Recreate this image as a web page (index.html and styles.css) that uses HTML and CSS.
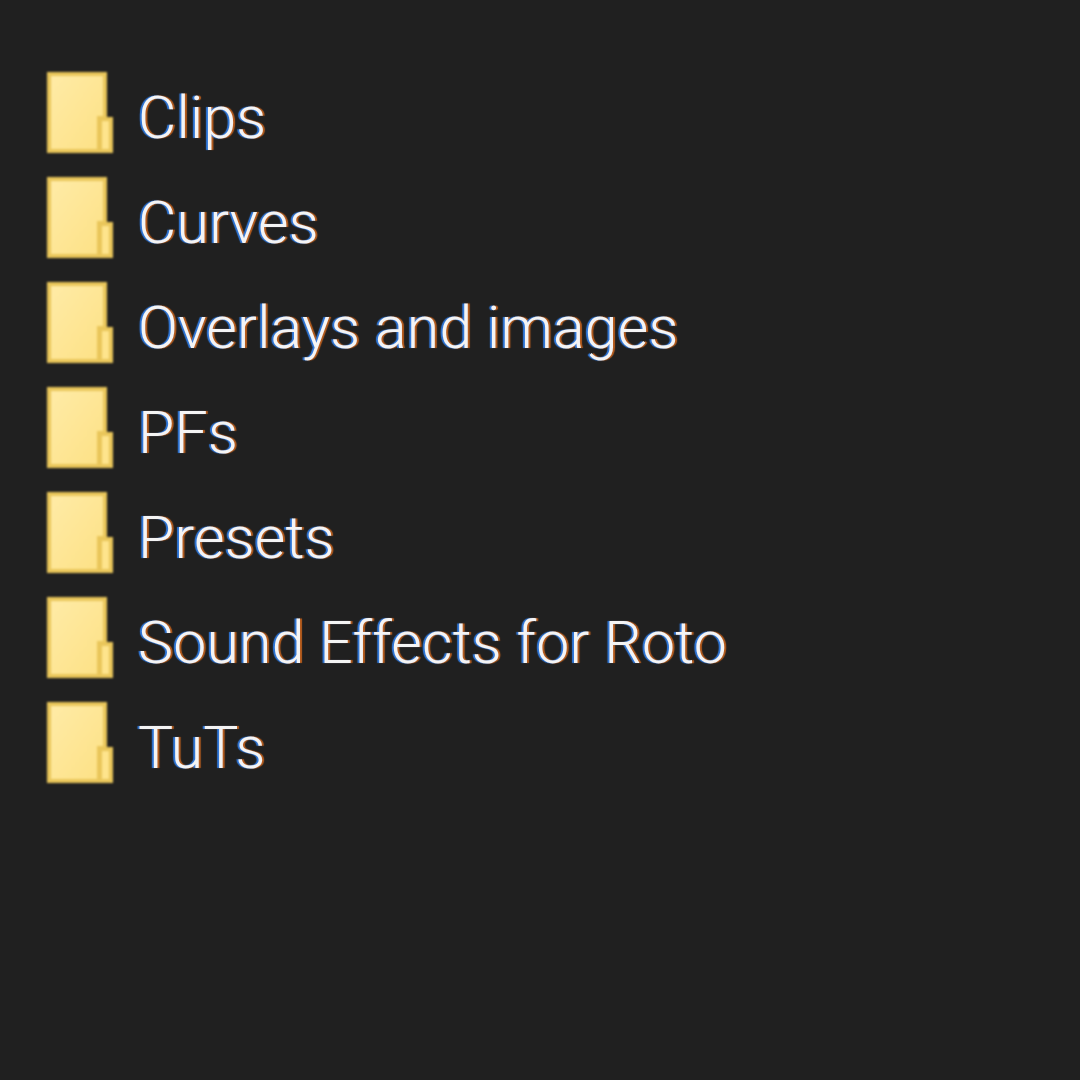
FILE: index.html
```html
<!DOCTYPE html>
<html lang="en">
<head>
  <meta charset="UTF-8">
  <title>Folders</title>
  <link rel="stylesheet" href="styles.css">
</head>
<body>
  <svg class="defs" width="0" height="0">
    <defs>
      <linearGradient id="folder-front" x1="0" y1="0" x2="1" y2="1">
        <stop offset="0" stop-color="#ffeba6"/>
        <stop offset="1" stop-color="#fde185"/>
      </linearGradient>
      <symbol id="folder" viewBox="0 0 66 81">
        <path d="M0 0H60V45H66V81H0Z" fill="#e9c65a"/>
        <path d="M4 4H56V44H50V77H4Z" fill="url(#folder-front)"/>
        <path d="M55 49H62V77H55Z" fill="#fee48c"/>
      </symbol>
    </defs>
  </svg>
  <ul class="folder-list">
    <li class="folder-row"><svg class="folder-icon"><use href="#folder"/></svg><span>Clips</span></li>
    <li class="folder-row"><svg class="folder-icon"><use href="#folder"/></svg><span>Curves</span></li>
    <li class="folder-row"><svg class="folder-icon"><use href="#folder"/></svg><span>Overlays and images</span></li>
    <li class="folder-row"><svg class="folder-icon"><use href="#folder"/></svg><span>PFs</span></li>
    <li class="folder-row"><svg class="folder-icon"><use href="#folder"/></svg><span>Presets</span></li>
    <li class="folder-row"><svg class="folder-icon"><use href="#folder"/></svg><span>Sound Effects for Roto</span></li>
    <li class="folder-row"><svg class="folder-icon"><use href="#folder"/></svg><span>TuTs</span></li>
  </ul>
</body>
</html>
```

FILE: styles.css
```css
body {
  margin: 0;
  height: 1080px;
  overflow: hidden;
  background-color: #202020;
  font-family: Roboto, "Open Sans", sans-serif;
}
.defs {
  position: absolute;
}
.folder-list {
  list-style: none;
  margin: 0;
  padding: 60px 0 0 47px;
}
.folder-row {
  display: flex;
  align-items: center;
  gap: 25px;
  height: 105px;
  color: #f4f4f4;
  font-size: 59px;
  font-weight: 300;
  letter-spacing: 0.2px;
  text-shadow: -2px 0 1px rgba(50, 130, 240, 0.9), 2px 0 1px rgba(200, 100, 30, 0.9);
}
.folder-row span {
  padding-top: 9px;
  filter: blur(0.7px);
}
.folder-icon {
  width: 66px;
  height: 81px;
  flex-shrink: 0;
  filter: blur(0.8px);
}
```
